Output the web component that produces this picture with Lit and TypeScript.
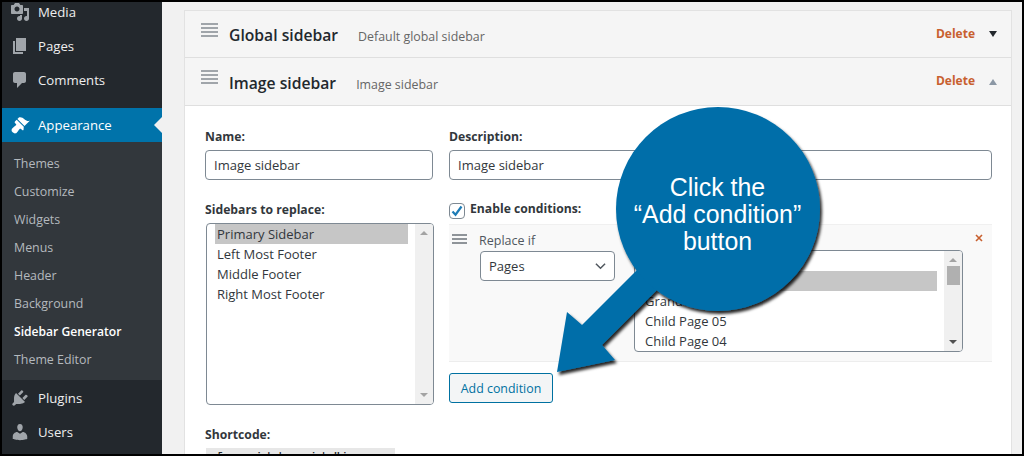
import { LitElement, html, css } from "lit";
import { customElement } from "lit/decorators.js";

const icons: Record<string, string> = {
  media: "M13 11V4c0-.55-.45-1-1-1h-1.67L9 1H5L3.67 3H2c-.55 0-1 .45-1 1v7c0 .55.45 1 1 1h10c.55 0 1-.45 1-1zM7 4.5c1.38 0 2.5 1.12 2.5 2.5S8.38 9.5 7 9.5 4.5 8.38 4.5 7 5.62 4.5 7 4.5zM14 6h5v10.5c0 1.38-1.12 2.5-2.5 2.5S14 17.88 14 16.5s1.12-2.5 2.5-2.5c.17 0 .34.02.5.05V9h-3V6zm-4 8.05V13h2v3.5c0 1.38-1.12 2.5-2.5 2.5S7 17.88 7 16.5 8.12 14 9.5 14c.17 0 .34.02.5.05z",
  pages: "M6 15V2h10v13H6zm-1 1h8v2H3V5h2v11z",
  comments: "M5 2h9c1.1 0 2 .9 2 2v7c0 1.1-.9 2-2 2h-2l-5 5v-5H5c-1.1 0-2-.9-2-2V4c0-1.1.9-2 2-2z",
  appearance: "M14.48 11.06L7.41 3.99l1.5-1.5c.5-.56 2.3-.47 3.51.32 1.21.8 1.43 1.28 2.91 2.1 1.18.64 2.45 1.26 4.45.85zm-.71.71L6.7 4.7 4.93 6.47c-.39.39-.39 1.02 0 1.41l1.06 1.06c.39.39.39 1.03 0 1.42-.6.6-1.43 1.11-2.21 1.69-.35.26-.7.53-1.01.84C1.43 13.71.96 15.65 2.65 17.3c1.65 1.69 3.59 1.22 4.45-.12.31-.31.58-.66.84-1.01.58-.78 1.09-1.61 1.69-2.21.39-.39 1.03-.39 1.42 0l1.06 1.06c.39.39 1.02.39 1.41 0z",
  plugins: "M13.11 4.36L9.87 7.6 8 5.73l3.24-3.24c.35-.34 1.05-.2 1.56.32.52.51.66 1.21.31 1.55zm-8 1.77l.91-1.12 9.01 9.01-1.19.84c-.71.71-2.63 1.16-3.82 1.16H6.14L4.9 17.26c-.59.59-1.54.59-2.12 0-.59-.58-.59-1.53 0-2.12l1.24-1.24v-3.88c0-1.13.4-3.19 1.09-3.89zm7.26 3.97l3.24-3.24c.34-.35 1.04-.21 1.55.31.52.51.66 1.21.31 1.55l-3.24 3.25z",
  users: "M10 9.25c-2.27 0-2.73-3.44-2.73-3.44C7 4.02 7.82 2 9.97 2c2.16 0 2.98 2.02 2.71 3.81 0 0-.41 3.44-2.68 3.44zm0 2.57L12.72 10c2.39 0 4.52 2.33 4.52 4.53v2.49s-3.65 1.13-7.24 1.13c-3.65 0-7.24-1.13-7.24-1.13v-2.49c0-2.25 1.94-4.48 4.47-4.48z",
};

const icon = (n: string) => html`<svg class="ico" viewBox="0 0 20 20"><path d=${icons[n]}></path></svg>`;
const handle = (cls: string) => html`<span class=${cls}><i></i><i></i><i></i><i></i></span>`;

@customElement("app-root")
export class AppRoot extends LitElement {
  static styles = css`
    :host { display: block; position: relative; width: 1024px; height: 456px; overflow: hidden; font-family: "Open Sans", "Noto Sans", sans-serif; font-size: 13px; color: #32373c; }
    * { box-sizing: border-box; }
    .frame { display: flex; width: 1024px; height: 456px; border: 2px solid #000; background: #f1f1f1; overflow: hidden; }
    .side { width: 160px; flex: none; background: #23282d; margin-top: -7px; color: #eee; display: flex; flex-direction: column; }
    .item { height: 34px; flex: none; display: flex; align-items: center; padding-left: 8px; gap: 8px; font-size: 13.2px; position: relative; }
    .ico { width: 20px; height: 20px; fill: #a0a5aa; flex: none; }
    .item.cur { background: #0073aa; color: #fff; }
    .item.cur .ico { fill: #fff; }
    .item.cur::after { content: ""; position: absolute; right: 0; top: 9px; border: 8px solid transparent; border-right-color: #f1f1f1; border-left-width: 0; }
    .sep { height: 11px; flex: none; }
    .sub { flex: none; background: #32373c; padding: 7px 0; margin-bottom: 1px; }
    .sub div { height: 28px; display: flex; align-items: center; padding-left: 12px; font-size: 12.4px; color: #b4b9be; }
    .sub .on { color: #fff; font-weight: 600; font-size: 12.1px; }
    .main { flex: 1; padding: 8px 10px 0 22px; min-width: 0; }
    .panel { border: solid #e2e2e2; border-width: 1px 1px 0; background: #fff; height: 460px; }
    .hd { height: 48px; background: #f5f5f5; border-bottom: 1px solid #dfdfdf; display: flex; align-items: center; padding: 0 15px; position: relative; }
    .hd:first-child { height: 47px; }
    .h-handle { display: flex; flex-direction: column; gap: 2px; width: 17px; margin: -9px 0 0 1px; flex: none; }
    .h-handle i { display: block; height: 2px; background: #a0a5aa; }
    .hd b { font-size: 15.7px; font-weight: 600; color: #23282d; margin: 2px 0 0 11px; }
    .hd span.d { font-size: 12.4px; color: #666; margin-left: 20px; margin-top: 5px; }
    .del { margin-left: auto; color: #c8602f; font-weight: 700; font-size: 12px; margin-top: -2px; }
    .tri { width: 0; height: 0; margin-left: 14px; border: 5px solid transparent; border-width: 6px 4px; margin-right: -1px; }
    .tri.down { border-top-color: #23282d; border-bottom-width: 0; }
    .tri.up { border-bottom-color: #8c98a5; border-top-width: 0; }
    .body { padding: 23px 20px 0 20px; display: grid; grid-template-columns: 228px 543px; column-gap: 16px; }
    label.l { display: block; font-weight: 700; font-size: 12.2px; color: #32373c; height: 16px; line-height: 16px; }
    .inp { display: block; height: 30px; margin-top: 5px; border: 1px solid #7e8993; border-radius: 4px; background: #fff; padding: 0 8px; line-height: 28px; font-size: 13px; color: #32373c; }
    .c1 { grid-column: 1; }
    .c2 { grid-column: 2; }
    .r2 { margin-top: 22px; }
    .list { border: 1px solid #7e8993; border-radius: 4px; background: #fff; display: flex; overflow: hidden; }
    .side-list { height: 182px; margin: 5px -1px 0 1px; }
    .rows { flex: 1; min-width: 0; padding: 0 7px 0 8px; }
    .rows div { height: 20px; line-height: 20px; padding-left: 2px; font-size: 13px; white-space: nowrap; overflow: hidden; }
    .rows .sel { background: #c6c6c6; }
    .sb { width: 18px; flex: none; background: #f0f0f0; display: flex; flex-direction: column; align-items: center; padding-top: 7px; position: relative; }
    .a-up { width: 0; height: 0; border: solid transparent; border-width: 0 4px 4px; border-bottom-color: #a3a3a3; }
    .a-dn { width: 0; height: 0; border: solid transparent; border-width: 4px 4px 0; border-top-color: #a3a3a3; position: absolute; bottom: 7px; }
    .cond-list .a-dn { border-top-color: #505050; }
    .thumb { width: 13px; height: 19px; background: #b0b0b0; margin-top: 4px; }
    .en { display: flex; align-items: flex-start; gap: 5px; height: 16px; margin-top: -1px; font-weight: 700; font-size: 12.2px; line-height: 16px; }
    .cb { width: 16px; height: 16px; margin-top: 2px; border: 1px solid #7e8993; border-radius: 4px; background: #fff; flex: none; display: flex; }
    .cb svg { width: 14px; height: 14px; }
    .cond { height: 138px; margin-top: 7px; background: #f9f9f9; border-top: 1px solid #f0f0f0; border-bottom: 1px solid #ededed; display: flex; position: relative; padding: 8px 0 0 3px; }
    .c-handle { display: flex; flex-direction: column; gap: 2px; width: 15px; flex: none; margin-top: 1px; }
    .c-handle i { display: block; height: 2px; background: #8f9499; }
    .c-handle i:last-child { display: none; }
    .cl { width: 155px; flex: none; margin-left: 12px; }
    .cl .t { font-size: 12.5px; height: 16px; line-height: 16px; color: #50575e; }
    .selbox { width: 135px; height: 30px; margin: 2px 0 0 1px; border: 1px solid #7e8993; border-radius: 4px; background: #fff; padding: 0 8px; display: flex; align-items: center; justify-content: space-between; font-size: 13px; }
    .selbox svg { width: 11px; height: 8px; margin-right: 0; }
    .cond-list { width: 329px; height: 102px; margin-top: 17px; flex: none; }
    .cond-list .rows { padding: 0 0 0 8px; }
    .cond-list .sel { margin-right: 7px; }
    .x { position: absolute; right: 9px; top: 9px; width: 8px; height: 8px; }
    .add { display: block; margin-top: 11px; width: 104px; height: 30px; line-height: 29px; text-align: center; border: 1px solid #0071a1; border-radius: 3px; background: #f3f5f6; color: #0071a1; font-size: 12.4px; }
    .sc { margin-top: 22px; }
    .code { width: 189px; height: 20px; margin: 5px 0 0 1px; background: #e7e7e7; font-size: 13px; font-family: "Liberation Mono", monospace; padding-left: 10px; line-height: 20px; white-space: nowrap; overflow: hidden; color: #23282d; }
    .callout { position: absolute; left: 540px; top: 90px; width: 300px; height: 300px; pointer-events: none; }
    .callout svg { position: absolute; inset: 0; width: 300px; height: 300px; overflow: visible; }
    .ctext { position: absolute; left: 77.5px; top: 84px; width: 200px; text-align: center; color: #fff; font: 24.9px/27px "Liberation Sans", Arial, sans-serif; }
  `;

  render() {
    return html`
      <div class="frame">
        <nav class="side">
          <div class="item">${icon("media")}Media</div>
          <div class="item">${icon("pages")}Pages</div>
          <div class="item">${icon("comments")}Comments</div>
          <div class="sep"></div>
          <div class="item cur">${icon("appearance")}Appearance</div>
          <div class="sub">
            <div>Themes</div><div>Customize</div><div>Widgets</div><div>Menus</div>
            <div>Header</div><div>Background</div><div class="on">Sidebar Generator</div><div>Theme Editor</div>
          </div>
          <div class="item">${icon("plugins")}Plugins</div>
          <div class="item">${icon("users")}Users</div>
        </nav>
        <main class="main">
          <section class="panel">
            <div class="hd">${handle("h-handle")}<b>Global sidebar</b><span class="d">Default global sidebar</span><span class="del">Delete</span><span class="tri down"></span></div>
            <div class="hd">${handle("h-handle")}<b>Image sidebar</b><span class="d">Image sidebar</span><span class="del">Delete</span><span class="tri up"></span></div>
            <div class="body">
              <div class="c1"><label class="l">Name:</label><div class="inp">Image sidebar</div></div>
              <div class="c2"><label class="l">Description:</label><div class="inp">Image sidebar</div></div>
              <div class="c1 r2">
                <label class="l">Sidebars to replace:</label>
                <div class="list side-list">
                  <div class="rows"><div class="sel">Primary Sidebar</div><div>Left Most Footer</div><div>Middle Footer</div><div>Right Most Footer</div></div>
                  <div class="sb"><span class="a-up"></span><span class="a-dn"></span></div>
                </div>
              </div>
              <div class="c2 r2">
                <div class="en"><span class="cb"><svg viewBox="0 0 14 14"><path d="M2.5 7.5l3 3.2L11.5 2.5" fill="none" stroke="#1e7cb6" stroke-width="2.2"></path></svg></span>Enable conditions:</div>
                <div class="cond">
                  ${handle("c-handle")}
                  <div class="cl">
                    <div class="t">Replace if</div>
                    <div class="selbox">Pages<svg viewBox="0 0 12 8"><path d="M1 1.5l5 5 5-5" fill="none" stroke="#50575e" stroke-width="1.6"></path></svg></div>
                  </div>
                  <div class="list cond-list">
                    <div class="rows"><div>Home</div><div class="sel">Parent Page</div><div>Grandchild Page</div><div>Child Page 05</div><div>Child Page 04</div></div>
                    <div class="sb"><span class="a-up"></span><span class="thumb"></span><span class="a-dn"></span></div>
                  </div>
                  <svg class="x" viewBox="0 0 8 8"><path d="M1 1l6 6M7 1L1 7" stroke="#c8602f" stroke-width="1.6"></path></svg>
                </div>
                <span class="add">Add condition</span>
              </div>
              <div class="c1 sc"><label class="l">Shortcode:</label><div class="code">[cs-sidebar id="image-sidebar"]</div></div>
            </div>
          </section>
        </main>
      </div>
      <div class="callout">
        <svg viewBox="0 0 300 300">
          <defs><filter id="sh" x="-20%" y="-20%" width="140%" height="140%"><feDropShadow dx="2" dy="3" stdDeviation="1.6" flood-color="#000" flood-opacity=".85"></feDropShadow></filter></defs>
          <g filter="url(#sh)" fill="#006ea9">
            <path d="M97 180L117 200L62 255L75 270L17 282L27 222L42 235Z"></path>
            <circle cx="178" cy="119" r="102"></circle>
          </g>
        </svg>
        <div class="ctext">Click the<br />“Add condition”<br />button</div>
      </div>
    `;
  }
}
